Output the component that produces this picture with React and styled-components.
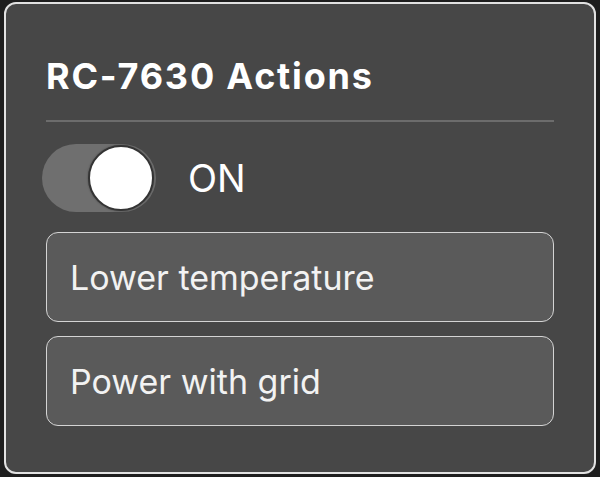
import React, { useState } from 'react';
import styled, { createGlobalStyle } from 'styled-components';

const GlobalStyle = createGlobalStyle`
  html, body {
    margin: 0;
    padding: 0;
    background: #1e1e1e;
    font-family: Inter, "Noto Sans", sans-serif;
  }
`

const Page = styled.div`
  width: 600px;
  height: 477px;
  padding: 2px 4px 3px;
  box-sizing: border-box;
`

const Card = styled.section`
  height: 100%;
  box-sizing: border-box;
  background: #474747;
  border: 2px solid #e2e2e2;
  border-radius: 12px;
  padding: 50px 40px 0 40px;
  display: flex;
  flex-direction: column;
`

const Title = styled.h2`
  margin: 0;
  color: #ffffff;
  font-size: 36px;
  font-weight: 700;
  line-height: 44px;
  letter-spacing: 1.8px;
`

const Divider = styled.hr`
  margin: 22px 0 0;
  border: none;
  height: 2px;
  background: #6c6c6c;
`

const ToggleRow = styled.div`
  display: flex;
  align-items: center;
  gap: 32px;
  margin: 22px 0 0 -4px;
`

const Track = styled.button`
  position: relative;
  width: 114px;
  height: 68px;
  padding: 0;
  border: none;
  border-radius: 34px;
  background: ${p => (p.$on ? '#6f6f6f' : '#3a3a3a')};
  cursor: pointer;
`

const Thumb = styled.span`
  position: absolute;
  top: 1px;
  left: ${p => (p.$on ? '46px' : '1px')};
  width: 62px;
  height: 62px;
  border-radius: 50%;
  background: #ffffff;
  border: 2px solid #343434;
  box-shadow: 0 0 2px rgba(0, 0, 0, 0.4);
`

const ToggleLabel = styled.span`
  color: #ffffff;
  font-size: 38px;
  font-weight: 400;
`

const Actions = styled.div`
  display: flex;
  flex-direction: column;
  gap: 14px;
  margin-top: 20px;
`

const ActionButton = styled.button`
  height: 90px;
  box-sizing: border-box;
  text-align: left;
  padding: 0 0 0 23px;
  background: #5a5a5a;
  border: 1.5px solid #d4d4d4;
  border-radius: 12px;
  color: #f2f2f2;
  font-family: Inter, "Noto Sans", sans-serif;
  font-size: 34px;
  font-weight: 400;
  cursor: pointer;
`

export default function App() {
  const [on, setOn] = useState(true);

  return (
    <Page>
      <GlobalStyle />
      <Card>
        <Title>RC-7630 Actions</Title>
        <Divider />
        <ToggleRow>
          <Track $on={on} onClick={() => setOn(!on)}>
            <Thumb $on={on} />
          </Track>
          <ToggleLabel>{on ? 'ON' : 'OFF'}</ToggleLabel>
        </ToggleRow>
        <Actions>
          <ActionButton>Lower temperature</ActionButton>
          <ActionButton>Power with grid</ActionButton>
        </Actions>
      </Card>
    </Page>
  );
}
